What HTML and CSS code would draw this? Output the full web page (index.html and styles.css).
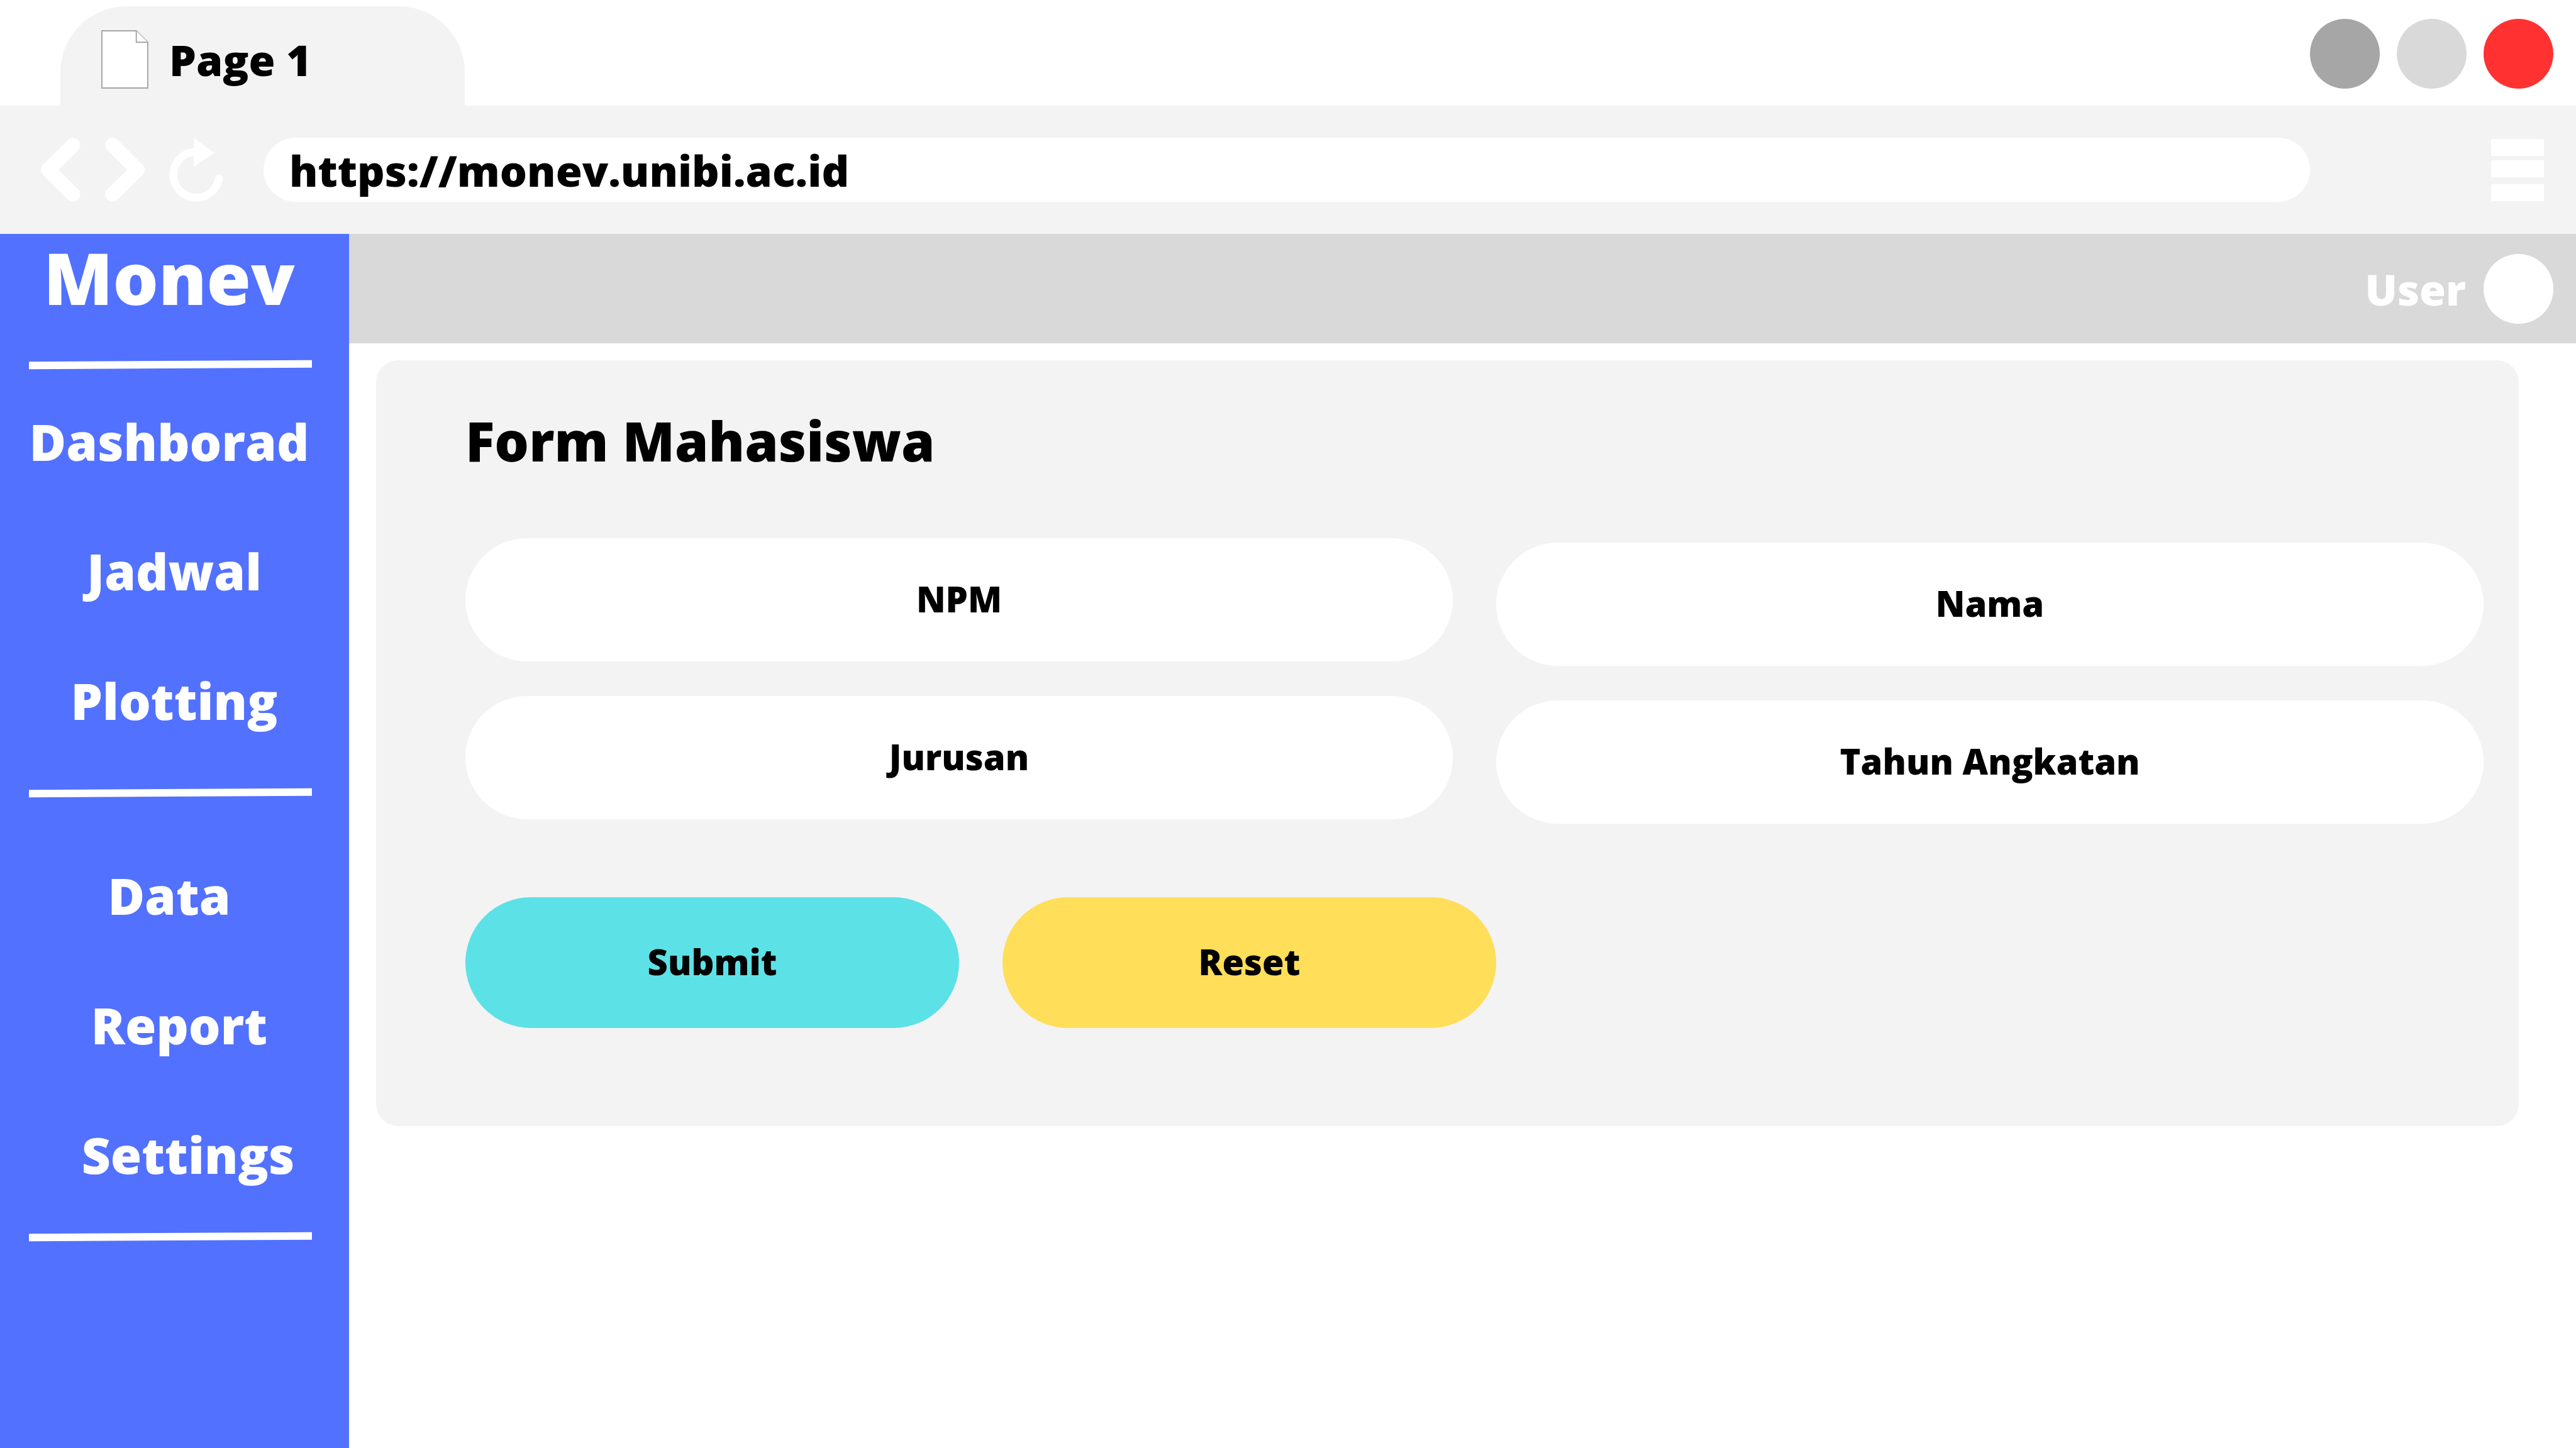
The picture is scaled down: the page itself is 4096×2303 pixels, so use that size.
FILE: index.html
```html
<!DOCTYPE html>
<html lang="id">
<head>
  <meta charset="utf-8">
  <meta name="viewport" content="width=device-width, initial-scale=1">
  <title>Monev - Form Mahasiswa</title>
  <link rel="stylesheet" href="styles.css">
</head>
<body>
  <div class="tab-strip">
    <div class="tab">
      <svg class="tab-icon" viewBox="0 0 78 97" aria-hidden="true">
        <path d="M1 1H58L77 20V96H1Z"/>
        <path d="M58 1V20H77"/>
      </svg>
      <span>Page 1</span>
    </div>
    <div class="window-controls">
      <button class="dot dot-minimize" type="button" aria-label="Minimize"></button>
      <button class="dot dot-maximize" type="button" aria-label="Maximize"></button>
      <button class="dot dot-close" type="button" aria-label="Close"></button>
    </div>
  </div>

  <div class="toolbar">
    <div class="history">
      <button class="icon-button" type="button" aria-label="Back">
        <svg class="chevron" viewBox="0 0 66 106"><path d="M53.5 12L12 53L53.5 94"/></svg>
      </button>
      <button class="icon-button" type="button" aria-label="Forward">
        <svg class="chevron" viewBox="0 0 66 106"><path d="M12.500 12L54 53L12.500 94"/></svg>
      </button>
      <button class="icon-button" type="button" aria-label="Reload">
        <svg class="reload" viewBox="0 0 90 106">
          <path class="reload-ring" d="M83 67.500A38.300 38.300 0 1 1 42 23"/>
          <path class="reload-head" d="M41 0L75 25L41 48Z"/>
        </svg>
      </button>
    </div>
    <input class="address" type="text" value="https://monev.unibi.ac.id" aria-label="Address">
    <button class="icon-button" type="button" aria-label="Menu">
      <svg class="menu" viewBox="0 0 84 99"><path d="M0 0H84V27H0ZM0 34H84V61H0ZM0 72H84V99H0Z"/></svg>
    </button>
  </div>

  <div class="app">
    <aside class="sidebar">
      <div class="brand">Monev</div>
      <hr class="rule">
      <nav class="nav">
        <a href="#dashboard">Dashborad</a>
        <a class="indent-small" href="#jadwal">Jadwal</a>
        <a class="indent-small" href="#plotting">Plotting</a>
      </nav>
      <hr class="rule">
      <nav class="nav nav-secondary">
        <a href="#data">Data</a>
        <a class="indent" href="#report">Report</a>
        <a class="indent-wide" href="#settings">Settings</a>
      </nav>
      <hr class="rule">
    </aside>

    <div class="content">
      <header class="topbar">
        <span>User</span>
        <button class="dot dot-avatar" type="button" aria-label="User menu"></button>
      </header>
      <main class="main">
        <form class="panel">
          <h1 class="title">Form Mahasiswa</h1>
          <div class="fields">
            <div class="column">
              <input class="field" type="text" placeholder="NPM" aria-label="NPM">
              <input class="field" type="text" placeholder="Jurusan" aria-label="Jurusan">
            </div>
            <div class="column column-right">
              <input class="field" type="text" placeholder="Nama" aria-label="Nama">
              <input class="field" type="text" placeholder="Tahun Angkatan" aria-label="Tahun Angkatan">
            </div>
          </div>
          <div class="actions">
            <button class="action action-submit" type="submit">Submit</button>
            <button class="action action-reset" type="reset">Reset</button>
          </div>
        </form>
      </main>
    </div>
  </div>
</body>
</html>
```
FILE: styles.css
```css
* {
  box-sizing: border-box;
}

body {
  margin: 0;
  min-height: 100vh;
  display: flex;
  flex-direction: column;
  background: #fff;
  color: #000;
  font-family: "Open Sans", sans-serif;
  font-weight: 800;
  font-size: 68px;
}

button,
input {
  margin: 0;
  padding: 0;
  border: 0;
  font: inherit;
  color: inherit;
}

svg {
  display: block;
}

/* Browser frame */
.tab-strip {
  display: flex;
  justify-content: space-between;
  height: 168px;
  padding: 0 36px 0 96px;
}

.tab {
  display: flex;
  align-items: center;
  gap: 33px;
  width: 643px;
  margin-top: 10px;
  padding: 10px 65px 0;
  border-radius: 105px 105px 0 0;
  background: #f3f3f3;
}

.tab-icon {
  width: 75px;
  height: 93px;
  fill: #fff;
  stroke: #a6a6a6;
  stroke-width: 2;
}

.window-controls {
  display: flex;
  align-items: center;
  gap: 27px;
  padding-top: 2px;
}

.dot {
  width: 111px;
  height: 111px;
  border-radius: 50%;
}

.dot-minimize {
  background: #a6a6a6;
}

.dot-maximize {
  background: #d9d9d9;
}

.dot-close {
  background: #ff3131;
}

.dot-avatar {
  background: #fff;
}

.toolbar {
  display: flex;
  align-items: center;
  height: 204px;
  padding: 0 51px 0 65px;
  background: #f3f3f3;
}

.history {
  display: flex;
  gap: 39px;
}

.icon-button {
  background: none;
}

.chevron {
  width: 63px;
  height: 102px;
  fill: none;
  stroke: #fff;
  stroke-width: 24;
  stroke-linecap: round;
  stroke-linejoin: round;
}

.reload {
  width: 86px;
  height: 102px;
}

.reload-ring {
  fill: none;
  stroke: #fff;
  stroke-width: 13;
  stroke-linecap: round;
}

.reload-head {
  fill: #fff;
}

.address {
  flex: 1;
  min-width: 0;
  height: 102px;
  margin: 0 288px 0 64px;
  padding: 0 41px;
  border-radius: 51px;
  background: #fff;
}

.menu {
  width: 84px;
  height: 99px;
  fill: #fff;
}

/* Application */
.app {
  flex: 1;
  display: flex;
}

.sidebar {
  flex: 0 0 555px;
  padding: 0 59px 0 46px;
  background: #5271ff;
  color: #fff;
  text-align: center;
}

.brand {
  margin-bottom: 64px;
  padding-right: 4px;
  font-size: 114px;
  line-height: 138px;
}

.rule {
  height: 12px;
  margin: 0;
  border: 0;
  background: #fff;
  transform: rotate(-0.3deg);
}

.nav {
  display: flex;
  flex-direction: column;
  gap: 96px;
  padding: 61px 4px 86px 0;
  font-size: 80px;
  line-height: 110px;
}

.nav-secondary {
  padding-top: 102px;
  padding-bottom: 70px;
}

.nav a {
  color: inherit;
  text-decoration: none;
}

.nav .indent-small {
  padding-left: 16px;
}

.nav .indent {
  padding-left: 32px;
}

.nav .indent-wide {
  padding-left: 60px;
}

.content {
  flex: 1;
  min-width: 0;
}

.topbar {
  display: flex;
  align-items: center;
  justify-content: flex-end;
  gap: 28px;
  height: 174px;
  padding-right: 36px;
  background: #d9d9d9;
  color: #fff;
}

.main {
  padding: 27px 91px 27px 43px;
}

.panel {
  padding: 69px 56px 156px 142px;
  border-radius: 35px;
  background: #f3f3f3;
}

.title {
  margin: 0 0 96px;
  font-size: 86px;
  font-weight: 800;
  line-height: 118px;
}

.fields {
  display: flex;
  gap: 69px;
  font-size: 56px;
}

.column {
  flex: 1;
  display: flex;
  flex-direction: column;
  gap: 55px;
}

.column-right {
  padding-top: 7px;
}

.field {
  width: 100%;
  height: 196px;
  padding-bottom: 4px;
  border-radius: 98px;
  background: #fff;
  text-align: center;
}

.field::placeholder {
  color: #000;
  opacity: 1;
}

.actions {
  display: flex;
  gap: 69px;
  margin-top: 117px;
  font-size: 56px;
}

.action {
  width: calc((100% - 69px) / 4);
  height: 208px;
  padding-bottom: 4px;
  border-radius: 104px;
}

.action-submit {
  background: #5ce1e6;
}

.action-reset {
  background: #ffde59;
}
```
